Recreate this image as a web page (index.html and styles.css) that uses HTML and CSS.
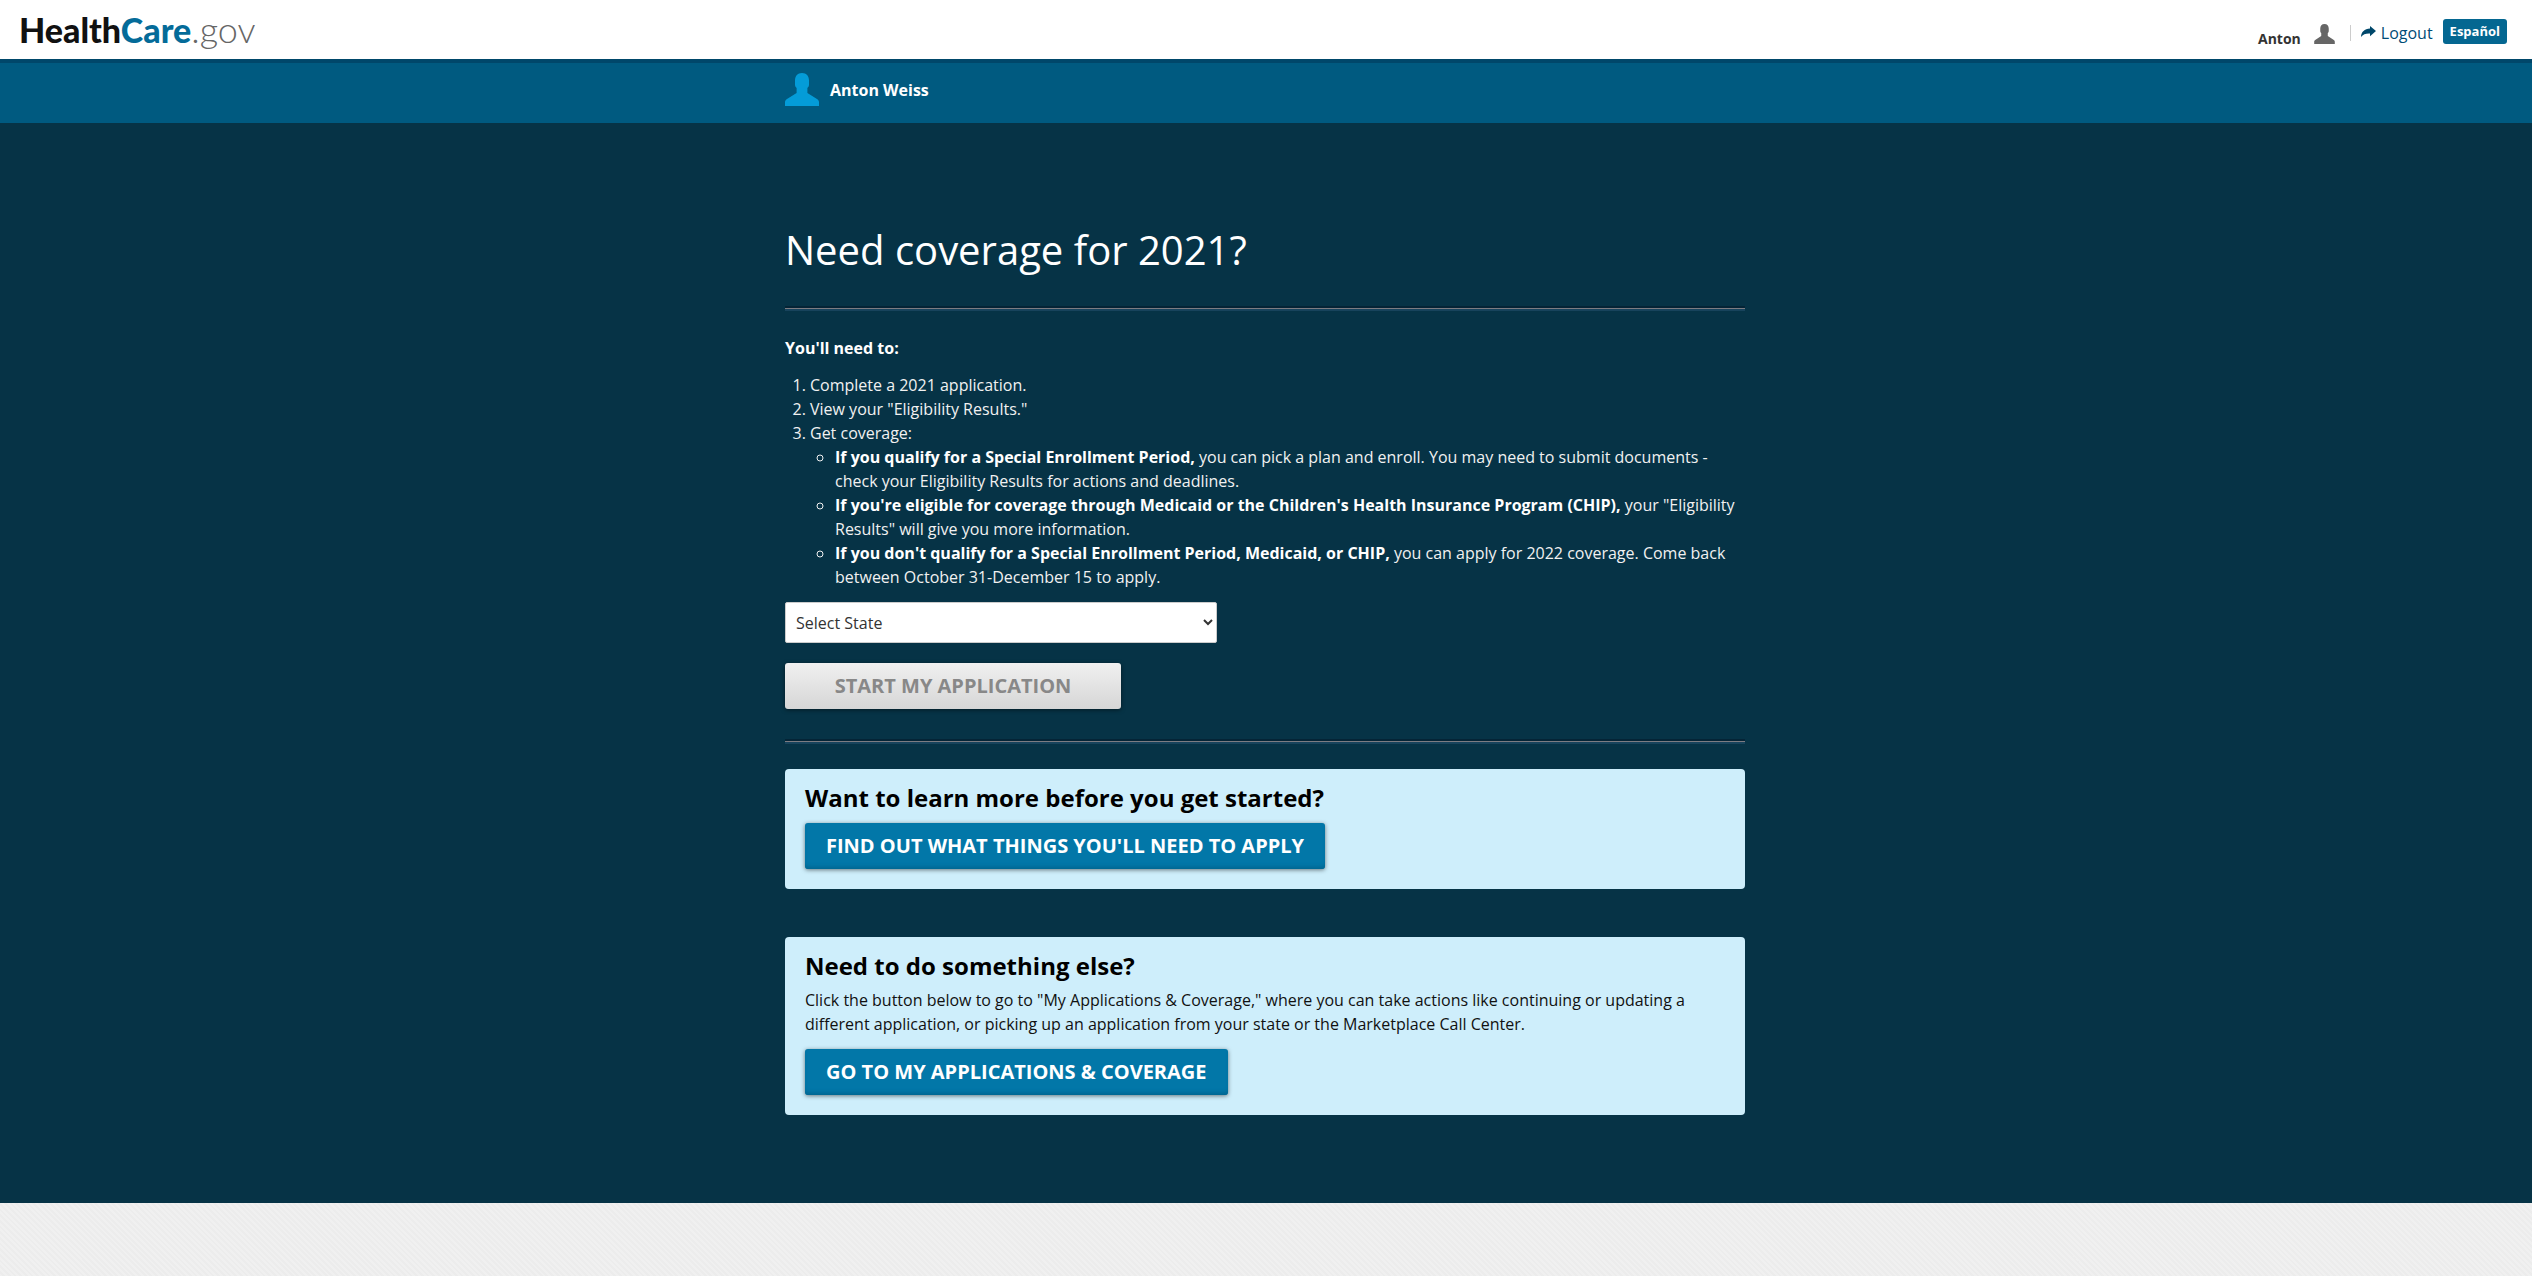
FILE: index.html
```html
<!DOCTYPE html>
<html lang="en">
<head>
<meta charset="utf-8">
<meta name="viewport" content="width=device-width, initial-scale=1">
<title>HealthCare.gov</title>
<link rel="stylesheet" href="styles.css">
</head>
<body>
<header class="site-header">
  <a class="logo" href="#"><span class="logo-health">Health</span><span class="logo-care">Care</span><span class="logo-gov">.gov</span></a>
  <nav class="account-nav" aria-label="Account">
    <a class="account-user" href="#">Anton
      <svg class="user-icon" viewBox="0 0 34 33" aria-hidden="true"><path d="M17 0c-4.500 0-7 3-7 7.500v4c0 2 .8 2.600 1.600 3.500v5L1.600 26.200C.4 27 0 28 0 29.500V33h34v-3.500c0-1.500-.4-2.500-1.600-3.300L22.400 20v-5c.8-.9 1.600-1.500 1.600-3.500v-4C24 3 21.500 0 17 0z"/></svg>
    </a>
    <a class="logout" href="#">
      <svg class="logout-icon" viewBox="0 0 15 11" aria-hidden="true"><path d="M9 0l6 5-6 5.200V7.500C5 7.300 2 8.200 0 11 .3 6 3.500 2.800 9 2.600z"/></svg>
      Logout
    </a>
    <button class="language" type="button" lang="es">Español</button>
  </nav>
</header>
<div class="user-band">
  <div class="wrap user-band-inner">
    <svg class="user-icon-large" viewBox="0 0 34 33" aria-hidden="true"><path d="M17 0c-4.500 0-7 3-7 7.500v4c0 2 .8 2.600 1.600 3.500v5L1.600 26.200C.4 27 0 28 0 29.500V33h34v-3.500c0-1.500-.4-2.500-1.600-3.300L22.400 20v-5c.8-.9 1.600-1.500 1.600-3.500v-4C24 3 21.500 0 17 0z"/></svg>
    <strong>Anton Weiss</strong>
  </div>
</div>
<main class="main">
  <div class="wrap">
    <h1 class="title">Need coverage for 2021?</h1>
    <hr class="rule rule-title">
    <p class="lead"><strong>You'll need to:</strong></p>
    <ol class="steps">
      <li>Complete a 2021 application.</li>
      <li>View your "Eligibility Results."</li>
      <li>Get coverage:
        <ul class="options">
          <li><strong>If you qualify for a Special Enrollment Period,</strong> you can pick a plan and enroll. You may need to submit documents - check your Eligibility Results for actions and deadlines.</li>
          <li><strong>If you're eligible for coverage through Medicaid or the Children's Health Insurance Program (CHIP),</strong> your "Eligibility Results" will give you more information.</li>
          <li><strong>If you don't qualify for a Special Enrollment Period, Medicaid, or CHIP,</strong> you can apply for 2022 coverage. Come back between October 31-December 15 to apply.</li>
        </ul>
      </li>
    </ol>
    <form class="start-form">
      <select class="state" aria-label="State"><option>Select State</option></select>
      <button class="button button-start" type="submit" disabled>START MY APPLICATION</button>
    </form>
    <hr class="rule">
    <section class="panel">
      <h2 class="panel-title">Want to learn more before you get started?</h2>
      <button class="button button-primary" type="button">FIND OUT WHAT THINGS YOU'LL NEED TO APPLY</button>
    </section>
    <section class="panel">
      <h2 class="panel-title">Need to do something else?</h2>
      <p class="panel-text">Click the button below to go to "My Applications &amp; Coverage," where you can take actions like continuing or updating a different application, or picking up an application from your state or the Marketplace Call Center.</p>
      <button class="button button-primary" type="button">GO TO MY APPLICATIONS &amp; COVERAGE</button>
    </section>
  </div>
</main>
</body>
</html>
```
FILE: styles.css
```css
* {
  box-sizing: border-box;
}

body {
  margin: 0;
  min-height: 100vh;
  font: 16px/24px "Open Sans", sans-serif;
  color: #111;
  background: repeating-linear-gradient(45deg, #f0f0f0 0 2px, #ececec 2px 4px);
}

.wrap {
  max-width: 962px;
  margin: 0 auto;
  padding-right: 2px;
}

/* Header */
.site-header {
  display: flex;
  justify-content: space-between;
  align-items: flex-start;
  min-height: 63px;
  padding: 0 25px 0 19px;
  background: #fff;
  border-bottom: 4px solid #00476a;
}

.logo {
  margin-top: 9px;
  font: 900 34px/40px Lato, sans-serif;
  text-decoration: none;
}

.logo-health {
  color: #111;
}

.logo-care {
  color: #046b99;
}

.logo-gov {
  font-size: 36px;
  font-weight: 300;
  color: #666;
}

.account-nav {
  display: flex;
  align-items: flex-start;
}

.account-user {
  display: flex;
  align-items: baseline;
  gap: 13px;
  margin-top: 24px;
  font-size: 14px;
  line-height: 20px;
  font-weight: 700;
  color: #333;
  text-decoration: none;
}

.user-icon {
  width: 21px;
  height: 20px;
  fill: #666;
}

.logout {
  display: flex;
  align-items: center;
  gap: 5px;
  margin-top: 21px;
  color: #004b76;
  text-decoration: none;
}

.logout::before {
  content: "";
  width: 1px;
  height: 16px;
  margin: 0 5px 0 15px;
  background: #ccc;
}

.logout-icon {
  width: 15px;
  height: 11px;
  margin-bottom: 4px;
  fill: #00476a;
}

.language {
  margin: 19px 0 0 10px;
  padding: 0 7px;
  border: 0;
  border-radius: 3px;
  font: 700 13px/25px "Open Sans", sans-serif;
  color: #fff;
  background: #046791;
}

/* Signed-in user */
.user-band {
  padding: 10px 0 17px;
  background: #005a80;
  color: #fff;
}

.user-band-inner {
  display: flex;
  align-items: center;
  gap: 11px;
}

.user-icon-large {
  width: 34px;
  height: 33px;
  fill: #049cd8;
}

/* Main column */
.main {
  padding: 103px 0 88px;
  color: #f1f1f1;
  background: #063346;
}

.main strong {
  color: #fff;
}

.title {
  margin: 0;
  font-size: 40px;
  line-height: 48px;
  font-weight: 400;
  color: #fff;
}

.rule {
  height: 5px;
  margin: 30px 0 25px;
  border: solid #042436;
  border-width: 2px 0 0;
  background: linear-gradient(#7c7c82 1px, #17435c 1px);
}

.rule-title {
  margin-top: 32px;
}

.lead {
  margin: 0 0 13px;
}

.steps {
  margin: 0 0 13px;
  padding-left: 25px;
}

.options {
  padding-left: 25px;
}

.start-form {
  display: flex;
  flex-direction: column;
  align-items: flex-start;
  gap: 20px;
}

.state {
  width: 45%;
  height: 41px;
  padding: 0 6px;
  border: 1px solid #ccc;
  border-radius: 2px;
  font: 16px/24px "Open Sans", sans-serif;
  color: #333;
  background: #fff;
}

.button {
  display: block;
  padding: 11px 21px;
  border: 0;
  border-radius: 3px;
  font: 700 20px/24px "Open Sans", sans-serif;
}

.button-start {
  width: 35%;
  color: #888;
  background: linear-gradient(#f0f0f0, #d6d6d6);
  box-shadow: 0 1px 4px rgba(0, 0, 0, .5);
}

.button-primary {
  margin-top: 13px;
  color: #fff;
  background: #0277a8;
  box-shadow: 0 1px 4px rgba(0, 0, 0, .5), inset 0 -4px 4px -2px #00658f;
}

.panel {
  padding: 17px 20px 20px;
  border-radius: 4px;
  color: #111;
  background: #ceeefb;
}

.panel + .panel {
  margin-top: 48px;
}

.panel-title {
  margin: 0 0 10px;
  font-size: 24px;
  line-height: 24px;
  color: #000;
}

.panel-text {
  margin: 0;
}
```
